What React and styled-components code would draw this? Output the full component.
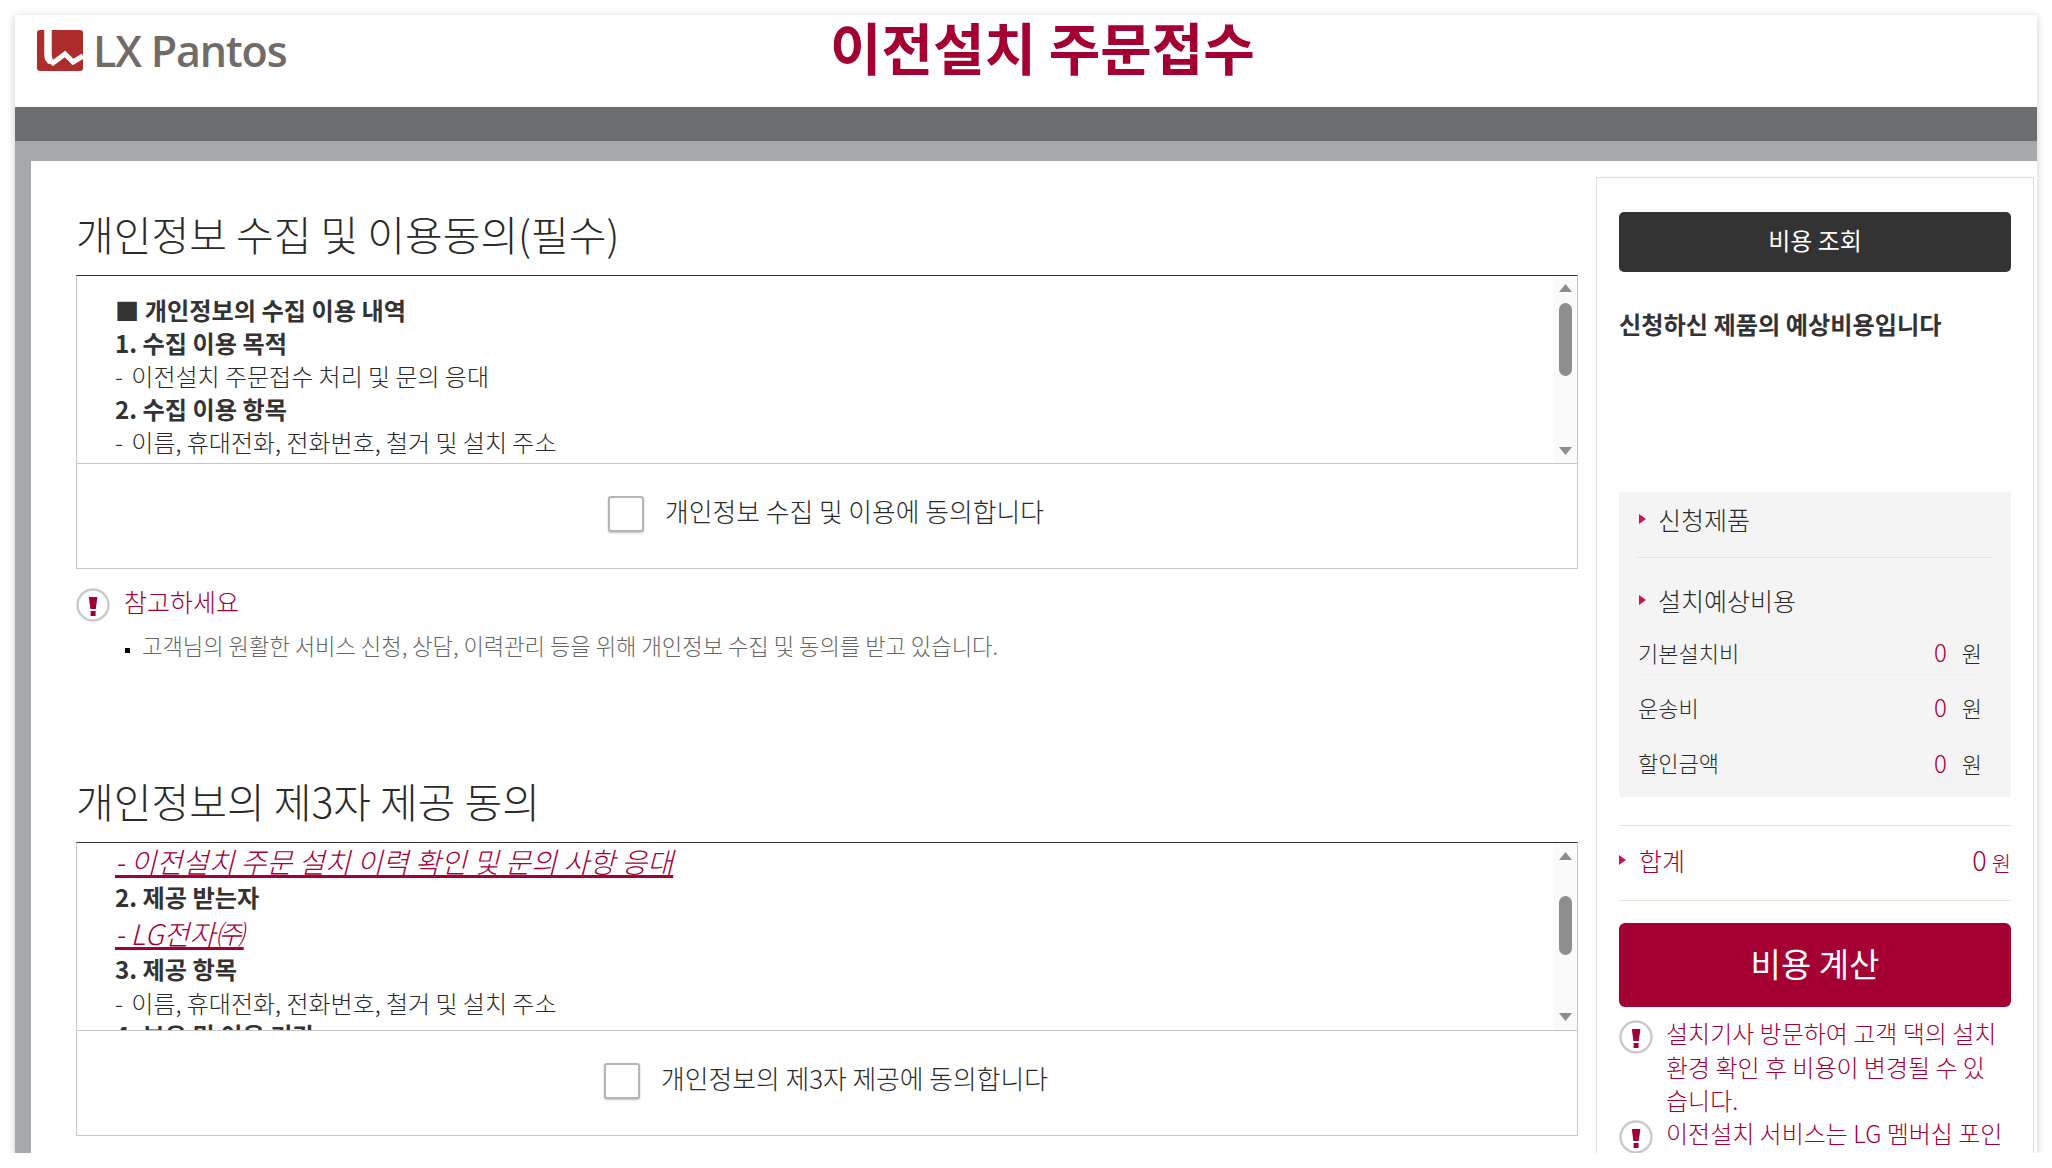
import React from "react";
import styled, { createGlobalStyle } from "styled-components";

const GlobalStyle = createGlobalStyle`
  html, body {
    margin: 0;
    padding: 0;
    background: #fff;
    font-family: "Noto Sans CJK KR", "Liberation Sans", sans-serif;
    color: #333;
  }
  * { box-sizing: border-box; }
`;

const AlertIcon = () => (
  <IconSvg viewBox="0 0 34 34">
    <circle cx="17" cy="17" r="15.5" fill="#fff" stroke="#cacaca" strokeWidth="2.4" />
    <path d="M12.8 9h8.6l-1.6 12h-5.4z" fill="#a50034" />
    <rect x="14.6" y="23" width="5" height="5" fill="#a50034" />
  </IconSvg>
);

const Scrollbar = ({ up, thumb, down }) => (
  <Track>
    <Arrow $top={up} viewBox="0 0 13 8"><path d="M6.5 0L13 8H0z" /></Arrow>
    <Thumb $top={thumb.top} $height={thumb.height} />
    <Arrow $top={down} viewBox="0 0 13 8"><path d="M0 0h13L6.5 8z" /></Arrow>
  </Track>
);

const App = () => {
  return (
    <Window>
      <GlobalStyle />
      <Header>
        <Logo>
          <svg width="46" height="41" viewBox="0 0 46 41">
            <rect width="46" height="41" rx="3" fill="#ad2c2c" />
            <path d="M11 0v24c0 3 1 6 3 7" fill="none" stroke="#fff" strokeWidth="7.5" />
            <path d="M11 28l5 5 12-9 8 8 10-6" fill="none" stroke="#fff" strokeWidth="5" />
          </svg>
          <LogoText>LX Pantos</LogoText>
        </Logo>
        <PageTitle>이전설치 주문접수</PageTitle>
      </Header>
      <DarkBar />
      <GreyBar />
      <Body>
        <Main>
          <SectionTitle>개인정보 수집 및 이용동의(필수)</SectionTitle>
          <TermsBox>
            <ScrollRow>
              <ScrollText>
                <Strong>■ 개인정보의 수집 이용 내역</Strong>
                <Strong>1. 수집 이용 목적</Strong>
                <Line><Dash>-</Dash> 이전설치 주문접수 처리 및 문의 응대</Line>
                <Strong>2. 수집 이용 항목</Strong>
                <Line><Dash>-</Dash> 이름, 휴대전화, 전화번호, 철거 및 설치 주소</Line>
              </ScrollText>
              <Scrollbar up={8} thumb={{ top: 11, height: 73 }} down={71} />
            </ScrollRow>
            <AgreeRow>
              <Check type="checkbox" />
              <AgreeLabel>개인정보 수집 및 이용에 동의합니다</AgreeLabel>
            </AgreeRow>
          </TermsBox>
          <NoteHead>
            <AlertIcon />
            <NoteTitle>참고하세요</NoteTitle>
          </NoteHead>
          <NoteList>
            <li>고객님의 원활한 서비스 신청, 상담, 이력관리 등을 위해 개인정보 수집 및 동의를 받고 있습니다.</li>
          </NoteList>

          <SectionTitle $second>개인정보의 제3자 제공 동의</SectionTitle>
          <TermsBox>
            <ScrollRow>
              <ScrollText $flush>
                <Marked>- 이전설치 주문 설치 이력 확인 및 문의 사항 응대</Marked>
                <Strong $tall>2. 제공 받는자</Strong>
                <Marked>- LG전자㈜</Marked>
                <Strong $tall>3. 제공 항목</Strong>
                <Line $tight><Dash>-</Dash> 이름, 휴대전화, 전화번호, 철거 및 설치 주소</Line>
                <Strong>4. 보유 및 이용 기간</Strong>
              </ScrollText>
              <Scrollbar up={9} thumb={{ top: 36, height: 59 }} down={58} />
            </ScrollRow>
            <AgreeRow>
              <Check type="checkbox" />
              <AgreeLabel>개인정보의 제3자 제공에 동의합니다</AgreeLabel>
            </AgreeRow>
          </TermsBox>
        </Main>

        <Aside>
          <DarkButton>비용 조회</DarkButton>
          <Lead>신청하신 제품의 예상비용입니다</Lead>
          <CostPanel>
            <PanelHead $first>신청제품</PanelHead>
            <PanelLine />
            <PanelHead>설치예상비용</PanelHead>
            <CostRow>
              <span>기본설치비</span>
              <Amount><b>0</b>원</Amount>
            </CostRow>
            <CostRow>
              <span>운송비</span>
              <Amount><b>0</b>원</Amount>
            </CostRow>
            <CostRow $last>
              <span>할인금액</span>
              <Amount><b>0</b>원</Amount>
            </CostRow>
          </CostPanel>
          <TotalRow>
            <TotalLabel>합계</TotalLabel>
            <TotalValue><b>0</b>원</TotalValue>
          </TotalRow>
          <RedButton>비용 계산</RedButton>
          <Notice>
            <AlertIcon />
            <p>설치기사 방문하여 고객 댁의 설치 환경 확인 후 비용이 변경될 수 있습니다.</p>
          </Notice>
          <Notice>
            <AlertIcon />
            <p>이전설치 서비스는 LG 멤버십 포인트 적립 대상이 아닙니다.</p>
          </Notice>
        </Aside>
      </Body>
    </Window>
  );
};

const Window = styled.div`
  width: 2022px;
  height: 1138px;
  margin: 15px 0 0 15px;
  background: #fff;
  overflow: hidden;
  display: flex;
  flex-direction: column;
  box-shadow: 0 2px 8px rgba(0, 0, 0, 0.22);
`;

const Header = styled.header`
  height: 92px;
  flex: none;
  display: flex;
  align-items: flex-start;
  padding: 1px 0 0 22px;
`;

const Logo = styled.div`
  width: 260px;
  flex: none;
  margin-top: 14px;
  display: flex;
  align-items: center;
  gap: 10px;
`;

const LogoText = styled.span`
  font-family: "Open Sans", sans-serif;
  font-size: 43px;
  line-height: 41px;
  font-weight: 600;
  letter-spacing: -1.2px;
  color: #716b66;
`;

const PageTitle = styled.h1`
  margin: 0 0 0 533px;
  font-size: 56px;
  line-height: 60px;
  font-weight: 700;
  white-space: nowrap;
  color: #a50034;
`;

const DarkBar = styled.div`
  height: 34px;
  flex: none;
  background: #6d6e72;
`;

const GreyBar = styled.div`
  height: 20px;
  flex: none;
  background: #a7a8ab;
`;

const Body = styled.div`
  flex: 1;
  min-height: 0;
  display: flex;
  background: #fff;
  border-left: 16px solid #a7a8ab;
`;

const Main = styled.main`
  width: 1547px;
  flex: none;
  padding: 0 0 0 45px;
`;

const SectionTitle = styled.h2`
  margin: ${(p) => (p.$second ? "111px" : "45px")} 0 0;
  padding-bottom: 15px;
  font-size: 41px;
  line-height: 54px;
  font-weight: 300;
  color: #2a2a2a;
`;

const TermsBox = styled.section`
  width: 1502px;
  border: 1px solid #c8c8c8;
  border-top-color: #333;
`;

const ScrollRow = styled.div`
  height: 188px;
  display: flex;
  border-bottom: 1px solid #c8c8c8;
  overflow: hidden;
`;

const ScrollText = styled.div`
  flex: 1;
  padding: ${(p) => (p.$flush ? "0" : "17px")} 0 0 38px;
  font-size: 24.2px;
`;

const Dash = styled.span`
  margin-right: 3px;
`;

const Line = styled.div`
  height: ${(p) => (p.$tight ? "31px" : "33px")};
  line-height: ${(p) => (p.$tight ? "31px" : "33px")};
  font-size: 24px;
  font-weight: 300;
  color: #2a2a2a;
`;

const Strong = styled.div`
  height: ${(p) => (p.$tall ? "37px" : "33px")};
  line-height: ${(p) => (p.$tall ? "37px" : "33px")};
  font-weight: 700;
  color: #333;
`;

const Marked = styled.div`
  height: 35px;
  line-height: 35px;
  font-size: 28.2px;
  font-style: italic;
  font-weight: 300;
  color: #a50034;
  text-decoration: underline;
  text-decoration-thickness: 3px;
  text-underline-offset: 2px;
`;

const Track = styled.div`
  width: 24px;
  flex: none;
  background: #fafafa;
  padding-left: 6px;
`;

const Arrow = styled.svg`
  display: block;
  width: 13px;
  height: 8px;
  margin-top: ${(p) => p.$top}px;
  fill: #8e8e8e;
`;

const Thumb = styled.div`
  width: 13px;
  height: ${(p) => p.$height}px;
  margin-top: ${(p) => p.$top}px;
  border-radius: 7px;
  background: #8e8e8e;
`;

const AgreeRow = styled.label`
  height: 104px;
  padding: 0 2px 5px 0;
  display: flex;
  align-items: center;
  justify-content: center;
  gap: 21px;
`;

const Check = styled.input`
  appearance: none;
  width: 36px;
  height: 36px;
  margin: 0;
  border: 2px solid #b5b5b5;
  border-radius: 3px;
  background: #fff;
  box-shadow: 0 1px 2px rgba(0, 0, 0, 0.25);
`;

const AgreeLabel = styled.span`
  margin-bottom: 6px;
  font-size: 25.8px;
  font-weight: 300;
  color: #2a2a2a;
`;

const NoteHead = styled.div`
  margin-top: 19px;
  display: flex;
  align-items: flex-start;
  gap: 14px;
`;

const IconSvg = styled.svg`
  width: 34px;
  height: 34px;
  flex: none;
`;

const NoteTitle = styled.span`
  margin-top: -4px;
  font-size: 25px;
  line-height: 34px;
  font-weight: 300;
  color: #a50034;
`;

const NoteList = styled.ul`
  margin: 7px 0 0;
  padding: 0 0 0 66px;
  list-style: square;
  font-size: 22.2px;
  line-height: 33px;
  font-weight: 300;
  color: #666;

  li::marker {
    color: #000;
    font-size: 14px;
  }
`;

const Aside = styled.aside`
  width: 438px;
  height: 999px;
  margin: 16px 0 0 18px;
  border: 1px solid #dcdcdc;
  border-bottom: 0;
  padding: 34px 22px 0;
  overflow: hidden;
`;

const DarkButton = styled.button`
  display: block;
  width: 392px;
  height: 60px;
  padding: 0 0 5px;
  border: 0;
  border-radius: 5px;
  background: #333;
  color: #fff;
  font: 400 24px "Noto Sans CJK KR", sans-serif;
`;

const Lead = styled.p`
  margin: 35px 0 0;
  font-size: 24.2px;
  line-height: 34px;
  font-weight: 700;
  color: #333;
`;

const CostPanel = styled.div`
  margin-top: 151px;
  height: 305px;
  padding: 5px 19px 0;
  background: #f4f4f4;
`;

const arrowMark = `
  position: relative;
  &::before {
    content: "";
    position: absolute;
    left: 1px;
    top: 50%;
    margin-top: -5px;
    border-left: 7px solid #c8174f;
    border-top: 5px solid transparent;
    border-bottom: 5px solid transparent;
  }
`;

const PanelHead = styled.div`
  ${arrowMark}
  height: 44px;
  margin-top: ${(p) => (p.$first ? "0" : "20px")};
  margin-bottom: ${(p) => (p.$first ? "0" : "-2px")};
  padding-left: 20px;
  font-size: 25px;
  line-height: 44px;
  font-weight: 300;
  color: #2a2a2a;
`;

const PanelLine = styled.div`
  height: 1px;
  margin-top: 16px;
  background: #e8e4d8;
`;

const CostRow = styled.div`
  width: 344px;
  height: 55px;
  padding-top: 9px;
  display: flex;
  align-items: center;
  justify-content: space-between;
  font-size: 22px;
  font-weight: 300;
  color: #2a2a2a;
  border-bottom: ${(p) => (p.$last ? "0" : "1px dotted #ececec")};
`;

const Amount = styled.span`
  b {
    font-size: 24px;
    font-weight: 300;
    color: #a50034;
    margin-right: 15px;
  }
`;

const TotalRow = styled.div`
  margin-top: 28px;
  height: 76px;
  padding-bottom: 7px;
  display: flex;
  align-items: center;
  justify-content: space-between;
  border-top: 1px solid #e8e4d8;
  border-bottom: 1px solid #e8e4d8;
  color: #a50034;
`;

const TotalLabel = styled.span`
  ${arrowMark}
  padding-left: 20px;
  font-size: 25px;
  font-weight: 300;

  &::before {
    left: 0;
  }
`;

const TotalValue = styled.span`
  font-size: 21px;
  font-weight: 300;

  b {
    font-size: 27px;
    font-weight: 300;
    margin-right: 5px;
  }
`;

const RedButton = styled.button`
  display: block;
  width: 392px;
  height: 84px;
  margin-top: 22px;
  padding: 0 0 5px;
  border: 0;
  border-radius: 6px;
  background: #a50034;
  color: #fff;
  font: 400 33px "Noto Sans CJK KR", sans-serif;
`;

const Notice = styled.div`
  display: flex;
  gap: 13px;
  margin-top: 13px;
  color: #a50034;

  & + & {
    margin-top: 0;
  }

  p {
    width: 340px;
    margin: -4px 0 3px;
    font-size: 24px;
    line-height: 33.5px;
    font-weight: 300;
  }
`;

export default App;
